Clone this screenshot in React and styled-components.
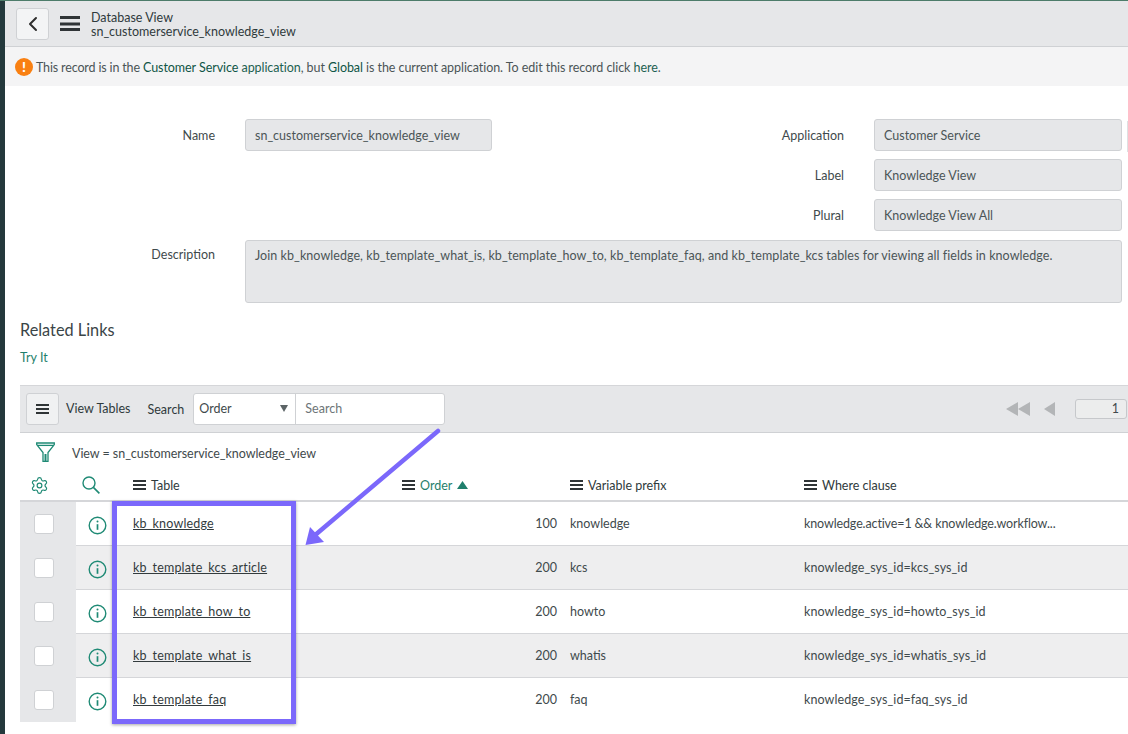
import styled, { createGlobalStyle } from "styled-components";
import { ChevronLeft, Settings } from "lucide-react";

const GlobalStyle = createGlobalStyle`
  html, body {
    margin: 0;
    background: #fff;
    overflow: hidden;
  }
  * { box-sizing: border-box; }
  body {
    font-family: "Lato", "Noto Sans", sans-serif;
    font-size: 13px;
    color: #3f4a4c;
  }
`;

const Page = styled.div`
  position: relative;
  width: 1128px;
  height: 734px;
  overflow: hidden;
  display: flex;
  border-top: 1px solid #4d7c6a;
`;

const Rail = styled.div`
  width: 5px;
  flex: none;
  background: #24393c;
`;

const Main = styled.main`
  flex: 1;
  min-width: 0;
`;

const Header = styled.header`
  height: 46px;
  background: #e6e7e9;
  border-bottom: 1px solid #cfd1d4;
  display: flex;
  align-items: center;
  padding-left: 11px;
`;

const BackButton = styled.button`
  width: 33px;
  height: 32px;
  padding: 0;
  margin-right: 11px;
  display: flex;
  align-items: center;
  justify-content: center;
  background: #f3f4f5;
  border: 1px solid #cfd1d4;
  border-radius: 3px;
  color: #2e2e2e;
`;

const Bars = styled.span`
  display: block;
  width: ${(p) => p.$w}px;
  height: ${(p) => p.$h}px;
  flex: none;
  border-top: ${(p) => p.$t}px solid #2f3436;
  border-bottom: ${(p) => p.$t}px solid #2f3436;
  position: relative;
  &::after {
    content: "";
    position: absolute;
    left: 0;
    right: 0;
    top: 50%;
    height: ${(p) => p.$t}px;
    transform: translateY(-50%);
    background: #2f3436;
  }
`;

const HeaderTitle = styled.div`
  margin-left: 11px;
  padding-top: 2px;
  line-height: 14px;
  font-size: 12.5px;
  color: #2f3a3c;
`;

const Notice = styled.div`
  height: 39px;
  background: #f4f4f5;
  display: flex;
  align-items: center;
  padding-left: 10px;
  font-size: 12.5px;
  letter-spacing: -0.06px;
  color: #4b5557;
`;

const AlertDot = styled.span`
  width: 18px;
  height: 18px;
  margin-right: 3px;
  border-radius: 50%;
  background: #f98012;
  color: #fff;
  font-weight: 900;
  font-size: 14px;
  line-height: 18px;
  text-align: center;
`;

const NoticeLink = styled.span`
  color: ${(p) => (p.$strong ? "#0f5546" : "#1d6152")};
  white-space: pre;
  padding-top: 2px;
`;

const NoticeText = styled.span`
  white-space: pre;
  padding-top: 2px;
  letter-spacing: ${(p) => p.$spacing || "inherit"};
`;

const Form = styled.section`
  padding: 33px 6px 0 0;
  display: grid;
  grid-template-columns: 210px 247px 1fr 248px;
  column-gap: 30px;
  row-gap: 8px;
  grid-template-rows: 32px 32px 32px 64px;
`;

const FieldLabel = styled.label`
  justify-self: end;
  align-self: ${(p) => (p.$top ? "start" : "center")};
  padding-top: ${(p) => (p.$top ? 8 : 0)}px;
  font-size: 12.5px;
  color: #3f4a4c;
  grid-column: ${(p) => p.$col};
  grid-row: ${(p) => p.$row};
`;

const FieldValue = styled.div`
  grid-column: ${(p) => p.$col};
  grid-row: ${(p) => p.$row};
  background: #e6e7e9;
  border: 1px solid #cfd1d4;
  border-radius: 3px;
  padding: 0 9px;
  display: flex;
  align-items: center;
  font-size: 12.5px;
  color: #4b5557;
`;

const Description = styled(FieldValue)`
  grid-column: 2 / 5;
  align-items: flex-start;
  margin-top: 1px;
  padding-top: 7px;
  letter-spacing: 0.06px;
`;

const AppSliver = styled.span`
  position: absolute;
  left: 1127px;
  top: 120px;
  width: 2px;
  height: 31px;
  background: #dfe0e2;
`;

const Related = styled.div`
  padding: 17px 0 0 15px;
  height: 82px;
`;

const RelatedTitle = styled.h2`
  margin: 0;
  font-weight: 400;
  font-size: 16.3px;
  line-height: 20px;
  color: #3a4547;
`;

const TryIt = styled.a`
  display: block;
  margin-top: 10px;
  font-size: 12.5px;
  line-height: 16px;
  color: #1f7f6c;
`;

const ListArea = styled.div`
  margin-left: 15px;
`;

const Toolbar = styled.div`
  height: 48px;
  background: #e6e7e9;
  border-top: 1px solid #d5d6d9;
  border-bottom: 1px solid #cfd1d4;
  display: flex;
  align-items: center;
  padding-left: 6px;
`;

const MenuButton = styled.button`
  width: 33px;
  height: 32px;
  padding: 0;
  display: flex;
  align-items: center;
  justify-content: center;
  background: #f0f1f2;
  border: 1px solid #cfd1d4;
  border-radius: 3px;
`;

const ToolbarTitle = styled.span`
  margin-left: 7px;
  padding-bottom: 2px;
  font-size: 12.5px;
  color: #2f3a3c;
`;

const SearchLabel = styled.span`
  margin-left: 17px;
  margin-right: 9px;
  font-size: 12.5px;
  color: #2f3a3c;
`;

const SearchGroup = styled.div`
  width: 252px;
  height: 32px;
  background: #fff;
  border: 1px solid #cfd1d4;
  border-radius: 3px;
  display: flex;
  align-items: center;
  font-size: 12.5px;
`;

const SelectBox = styled.div`
  width: 102px;
  height: 100%;
  padding: 0 5px 2px;
  border-right: 1px solid #cfd1d4;
  display: flex;
  align-items: center;
  justify-content: space-between;
  color: #3f4a4c;
`;

const Caret = styled.span`
  width: 0;
  height: 0;
  border-left: 4px solid transparent;
  border-right: 4px solid transparent;
  border-top: 7px solid #5c6466;
  margin-right: 2px;
`;

const Placeholder = styled.span`
  padding: 0 0 2px 9px;
  color: #6d7577;
`;

const Pager = styled.div`
  margin-left: auto;
  display: flex;
  align-items: center;
`;

const PageInput = styled.div`
  width: 52px;
  height: 20px;
  margin-left: 20px;
  margin-right: 1px;
  border: 1px solid #c6c8cb;
  border-radius: 3px;
  background: #eceded;
  text-align: right;
  padding-right: 7px;
  font-size: 12.5px;
  line-height: 18px;
`;

const FilterRow = styled.div`
  height: 37px;
  display: flex;
  align-items: center;
  padding-left: 16px;
  font-size: 12.5px;
  color: #3f4a4c;
  gap: 17px;
`;

const FilterText = styled.span`
  padding-top: 4px;
  letter-spacing: -0.05px;
`;

const Row = styled.div`
  display: grid;
  grid-template-columns: 56px 50px 269px 168px 234px 1fr;
  align-items: center;
  height: 44px;
  background: ${(p) => (p.$shade ? "#eeeeef" : "#fff")};
  border-bottom: 1px solid ${(p) => (p.$last ? "transparent" : "#d5d6d9")};
`;

const HeadRow = styled(Row)`
  border-bottom: 2px solid #d5d6d9;
  background: #fff;
  height: 32px;
`;

const HeadCell = styled.div`
  display: flex;
  align-items: center;
  gap: 5px;
  padding-left: 7px;
  font-size: 12.5px;
  color: ${(p) => (p.$active ? "#1f7f6c" : "#2f3a3c")};
`;

const IconCell = styled.div`
  display: flex;
  justify-content: center;
  color: #1f8a75;
  padding-right: ${(p) => p.$right}px;
  padding-top: ${(p) => p.$down || 0}px;
`;

const CheckCell = styled.div`
  align-self: stretch;
  margin-bottom: ${(p) => (p.$last ? 0 : -1)}px;
  background: #e6e7e9;
  display: flex;
  align-items: center;
  justify-content: center;
`;

const CheckBox = styled.span`
  width: 20px;
  height: 20px;
  background: #fff;
  border: 1px solid #cfd1d4;
  border-radius: 3px;
  margin-top: -1px;
  margin-right: 8px;
`;

const Cell = styled.div`
  padding-left: 7px;
  font-size: 12.5px;
  color: #3f4a4c;
  white-space: nowrap;
`;

const NumberCell = styled(Cell)`
  text-align: right;
  padding-right: 6px;
`;

const WhereCell = styled(Cell)`
  letter-spacing: ${(p) => (p.$tight ? -0.12 : 0.08)}px;
`;

const TableLink = styled.a`
  color: #333b3d;
  text-decoration: underline;
  letter-spacing: 0.17px;
`;

const Highlight = styled.div`
  position: absolute;
  left: 112px;
  top: 500px;
  width: 184px;
  height: 223px;
  border: 5px solid #7b68fb;
  box-shadow: 0 1px 3px rgba(0, 0, 0, 0.35);
  pointer-events: none;
`;

const ArrowLayer = styled.svg`
  position: absolute;
  left: 0;
  top: 0;
  pointer-events: none;
`;

const InfoIcon = () => (
  <svg width="19" height="19" viewBox="0 0 19 19" fill="none" stroke="currentColor">
    <circle cx="9.5" cy="9.5" r="8.3" strokeWidth="1.4" />
    <path d="M9.5 8.2v5.6" strokeWidth="1.7" />
    <circle cx="9.5" cy="5.4" r="1" fill="currentColor" stroke="none" />
  </svg>
);

const FunnelIcon = () => (
  <svg width="19" height="20" viewBox="0 0 19 20" fill="none" stroke="#1f8a75" strokeWidth="1.3">
    <path d="M.7 1H18.3V2.6L12 10.5V19.3H7V10.5L.7 2.6Z" />
    <path d="M1 3.4H18" />
    <path d="M9.5 12v7" strokeWidth="2" />
  </svg>
);

const LensIcon = () => (
  <svg width="18" height="18" viewBox="0 0 18 18" fill="none" stroke="currentColor" strokeWidth="1.4">
    <circle cx="7" cy="7" r="6" />
    <path d="M11.4 11.4L17.4 17.4" strokeWidth="1.6" />
  </svg>
);

const PagerArrows = () => (
  <svg width="49" height="14" viewBox="0 0 49 14" fill="#b3b5b7">
    <path d="M0 7l12-7v14z" />
    <path d="M12 7l12-7v14z" />
    <path d="M38 7l11-7v14z" />
  </svg>
);

const SortUp = () => (
  <svg width="11" height="8" viewBox="0 0 11 8" fill="#1f7f6c">
    <path d="M5.5 0L11 8H0z" />
  </svg>
);

const rows = [
  { table: "kb_knowledge", order: 100, prefix: "knowledge", where: "knowledge.active=1 && knowledge.workflow..." },
  { table: "kb_template_kcs_article", order: 200, prefix: "kcs", where: "knowledge_sys_id=kcs_sys_id" },
  { table: "kb_template_how_to", order: 200, prefix: "howto", where: "knowledge_sys_id=howto_sys_id" },
  { table: "kb_template_what_is", order: 200, prefix: "whatis", where: "knowledge_sys_id=whatis_sys_id" },
  { table: "kb_template_faq", order: 200, prefix: "faq", where: "knowledge_sys_id=faq_sys_id" },
];

const columns = [
  { name: "Table" },
  { name: "Order", active: true },
  { name: "Variable prefix" },
  { name: "Where clause" },
];

export default function App() {
  return (
    <Page>
      <GlobalStyle />
      <Rail />
      <Main>
        <Header>
          <BackButton>
            <ChevronLeft size={24} strokeWidth={2} />
          </BackButton>
          <Bars $w={20} $h={15} $t={3} />
          <HeaderTitle>
            Database View
            <br />
            sn_customerservice_knowledge_view
          </HeaderTitle>
        </Header>
        <Notice>
          <AlertDot>!</AlertDot>
          <NoticeText $spacing="-0.15px">This record is in the </NoticeText>
          <NoticeLink $strong>Customer Service</NoticeLink>
          <NoticeLink> application</NoticeLink>
          <NoticeText>, but </NoticeText>
          <NoticeLink $strong>Global</NoticeLink>
          <NoticeText> is the current application. To edit this record click </NoticeText>
          <NoticeLink>here</NoticeLink>
          <NoticeText>.</NoticeText>
        </Notice>
        <Form>
          <FieldLabel $col={1} $row={1}>Name</FieldLabel>
          <FieldValue $col={2} $row={1}>sn_customerservice_knowledge_view</FieldValue>
          <FieldLabel $col={3} $row={1}>Application</FieldLabel>
          <FieldValue $col={4} $row={1}>Customer Service</FieldValue>
          <FieldLabel $col={3} $row={2}>Label</FieldLabel>
          <FieldValue $col={4} $row={2}>Knowledge View</FieldValue>
          <FieldLabel $col={3} $row={3}>Plural</FieldLabel>
          <FieldValue $col={4} $row={3}>Knowledge View All</FieldValue>
          <FieldLabel $col={1} $row={4} $top>Description</FieldLabel>
          <Description $row={4}>
            Join kb_knowledge, kb_template_what_is, kb_template_how_to, kb_template_faq, and kb_template_kcs tables for viewing all fields in knowledge.
          </Description>
        </Form>
        <Related>
          <RelatedTitle>Related Links</RelatedTitle>
          <TryIt>Try It</TryIt>
        </Related>
        <ListArea>
          <Toolbar>
            <MenuButton>
              <Bars $w={13} $h={10} $t={2} />
            </MenuButton>
            <ToolbarTitle>View Tables</ToolbarTitle>
            <SearchLabel>Search</SearchLabel>
            <SearchGroup>
              <SelectBox>
                Order
                <Caret />
              </SelectBox>
              <Placeholder>Search</Placeholder>
            </SearchGroup>
            <Pager>
              <PagerArrows />
              <PageInput>1</PageInput>
            </Pager>
          </Toolbar>
          <FilterRow>
            <FunnelIcon />
            <FilterText>View = sn_customerservice_knowledge_view</FilterText>
          </FilterRow>
          <HeadRow>
            <IconCell $right={17}>
              <Settings size={19} strokeWidth={1.5} />
            </IconCell>
            <IconCell $right={21}>
              <LensIcon />
            </IconCell>
            {columns.map((col) => (
              <HeadCell key={col.name} $active={col.active}>
                <Bars $w={13} $h={10} $t={2} />
                {col.name}
                {col.active && <SortUp />}
              </HeadCell>
            ))}
          </HeadRow>
          {rows.map((row, i) => (
            <Row key={row.table} $shade={i % 2 === 1} $last={i === rows.length - 1}>
              <CheckCell>
                <CheckBox />
              </CheckCell>
              <IconCell $right={7} $down={3}>
                <InfoIcon />
              </IconCell>
              <Cell>
                <TableLink>{row.table}</TableLink>
              </Cell>
              <NumberCell>{row.order}</NumberCell>
              <Cell>{row.prefix}</Cell>
              <WhereCell $tight={i === 0}>{row.where}</WhereCell>
            </Row>
          ))}
        </ListArea>
      </Main>
      <AppSliver />
      <Highlight />
      <ArrowLayer width="1128" height="734" viewBox="0 0 1128 734">
        <path d="M438 430L314 535" stroke="#7b68fb" strokeWidth="4.5" strokeLinecap="round" />
        <path d="M305.5 544L310 526L324 541z" fill="#7b68fb" />
      </ArrowLayer>
    </Page>
  );
}
